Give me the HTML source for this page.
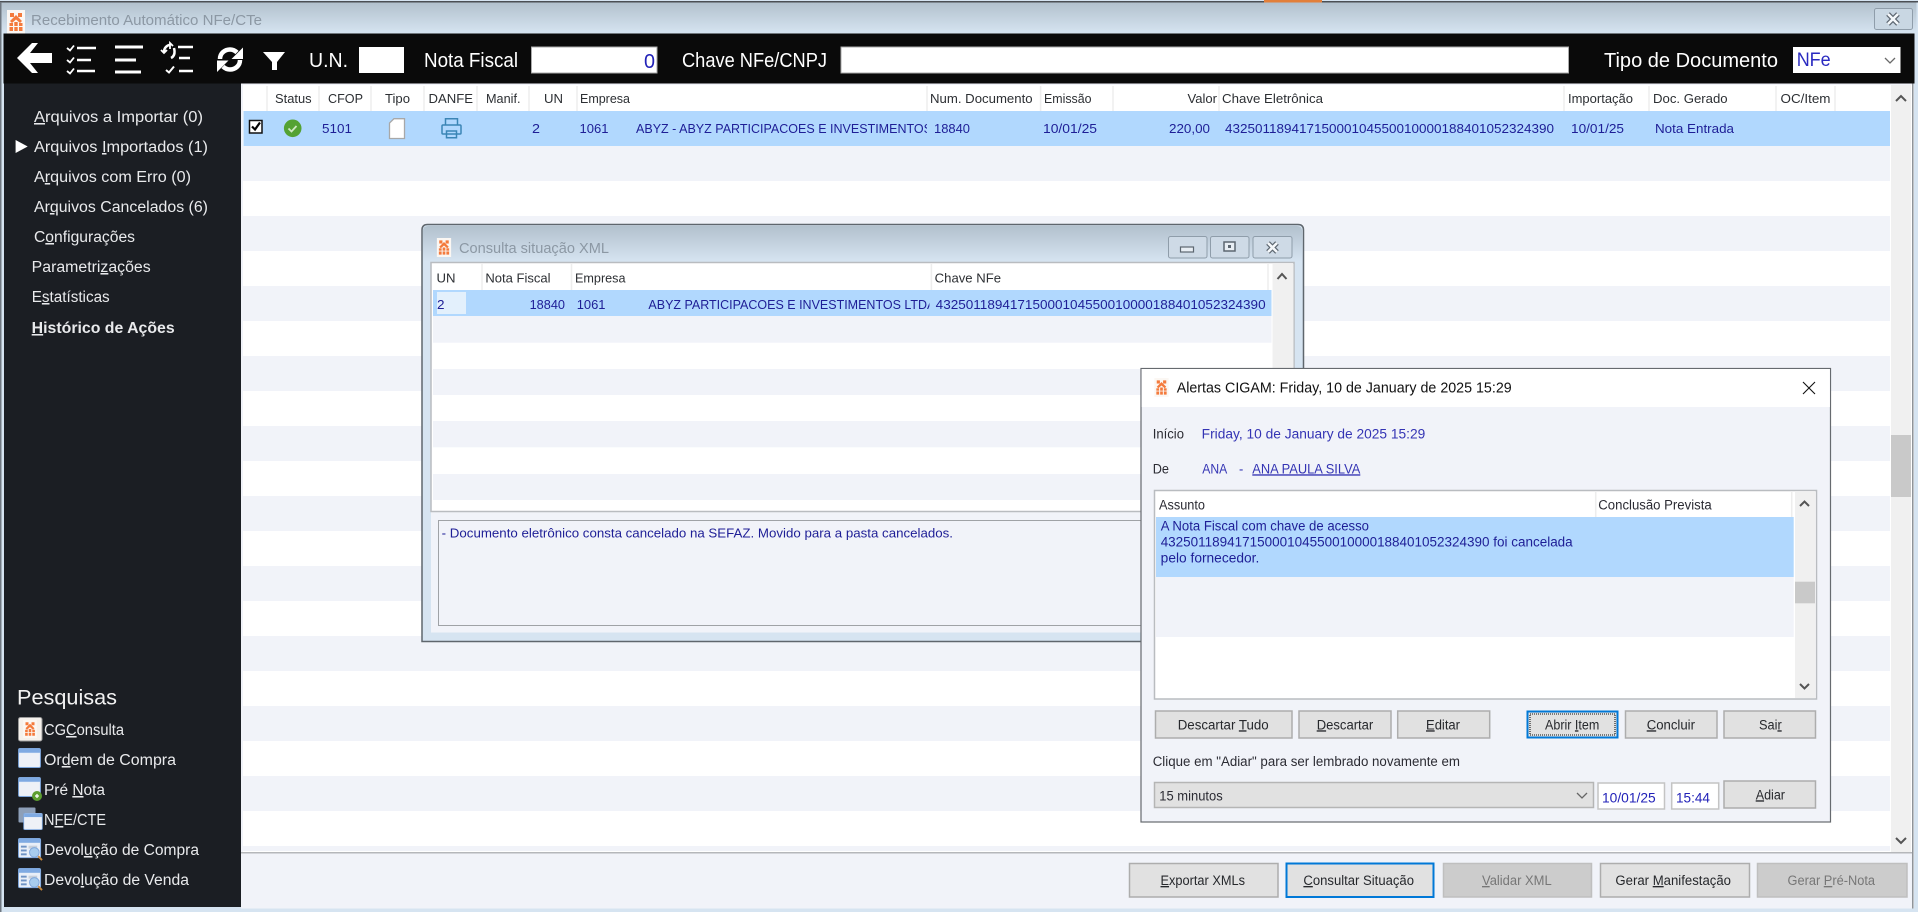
<!DOCTYPE html>
<html lang="pt-BR">
<head>
<meta charset="utf-8">
<title>Recebimento Automático NFe/CTe</title>
<style>
html,body{margin:0;padding:0;background:#f1f3f9;width:1918px;height:912px;overflow:hidden}
svg{display:block}
text{font-family:"Liberation Sans",sans-serif;font-size:13px;white-space:pre}
.h{fill:#2c2f33}
.r{fill:#1e1e96}
.s{fill:#e9eaec;font-size:15.5px}
.t{fill:#fff;font-size:20px}
.a{fill:#3434b4;font-size:13.5px}
.k{fill:#2b2b33;font-size:13.5px}
.b{fill:#26282c;font-size:13.5px}
.d{fill:#777;font-size:13.5px}
u,.u{text-decoration:underline}
</style>
</head>
<body>
<svg xmlns="http://www.w3.org/2000/svg" width="1918" height="912" viewBox="0 0 1918 912">
<defs>
<linearGradient id="tg" x1="0" y1="0" x2="0" y2="1"><stop offset="0" stop-color="#b2c1cd"/><stop offset="1" stop-color="#d6e4f1"/></linearGradient>
<symbol id="logo" viewBox="0 0 18 24">
<rect x="0" y="0" width="18" height="24" fill="#fbf7f3"/>
<g fill="#f47a3c"><rect x="3" y="3" width="4" height="4"/><rect x="11" y="3" width="4" height="4"/><path d="M9 5l6 6-2 2-4-3.500-4 3.500-2-2z"/><rect x="2.500" y="13" width="3.500" height="3"/><rect x="12" y="13" width="3.500" height="3"/><rect x="7.300" y="12" width="3.400" height="4"/><rect x="2.500" y="17" width="3.500" height="4"/><rect x="7.300" y="17" width="3.400" height="4"/><rect x="12" y="17" width="3.500" height="4"/></g>
</symbol>
<symbol id="win" viewBox="0 0 24 21">
<rect x=".5" y=".5" width="23" height="20" rx="1.500" fill="#e9eff8" stroke="#7da6dc"/>
<rect x="1" y="1" width="22" height="4" fill="#7faae2"/>
<rect x="2" y="6" width="20" height="13" fill="#eef1f7"/>
</symbol>
<symbol id="dev" viewBox="0 0 26 25">
<rect x=".5" y=".5" width="23" height="20" rx="1.500" fill="#e9eff8" stroke="#7da6dc"/>
<rect x="1" y="1" width="22" height="4" fill="#7faae2"/>
<rect x="3" y="8" width="6" height="2" fill="#6f93c4"/><rect x="3" y="12" width="6" height="2" fill="#6f93c4"/><rect x="3" y="16" width="6" height="2" fill="#6f93c4"/>
<rect x="11" y="8" width="9" height="3" fill="#c7cfda"/>
<circle cx="17" cy="15" r="5" fill="#a8cdee" stroke="#7da6dc"/>
<path d="M21 19l4 4" stroke="#c98a3c" stroke-width="2"/>
</symbol>
</defs>

<!-- frame -->
<rect width="1918" height="912" fill="#d6e4f1"/>
<rect x="0" y="1" width="1918" height="1.500" fill="#4b4f54"/>
<rect x="1264" y="0" width="58" height="2.500" fill="#e27f3a"/>
<rect x="0" y="2" width="1.500" height="910" fill="#6f7780"/>
<rect x="1.500" y="2.500" width="1915" height="31" fill="url(#tg)"/>
<use href="#logo" x="7" y="10" width="18" height="24"/>
<text x="31" y="25" fill="#8c98a4" font-size="14.500" textLength="231" lengthAdjust="spacingAndGlyphs" style="font-size:14.500px">Recebimento Automático NFe/CTe</text>
<rect x="1874.500" y="8.500" width="38" height="21" rx="2" fill="#c9d7e3" stroke="#8f9daa"/>
<path d="M1888 14l10 10M1898 14l-10 10" stroke="#5c6670" stroke-width="5"/>
<path d="M1888 14l10 10M1898 14l-10 10" stroke="#f4f7fa" stroke-width="2.600"/>

<!-- toolbar -->
<rect x="3.500" y="33.500" width="1911" height="50" fill="#0a0a0a"/>
<path d="M17 58L32 43H38L30 53H52V63H30L38 73H32Z" fill="#fff"/>
<g fill="none" stroke="#fff" stroke-width="2.500">
<path d="M77 48H96M77 60H91M77 71H95"/>
<path d="M67 48l3 2.500 4-5M67 60l3 2.500 4-5M67 71l3 2.500 4-5" stroke-width="1.800"/>
</g>
<path d="M115 47H143M115 60H136M115 72H141" stroke="#fff" stroke-width="3" fill="none"/>
<g fill="none" stroke="#fff" stroke-width="2.500">
<path d="M178 47H193M179 58H190M179 71H193"/>
<path d="M164 52c0-4 3-7 6-7M174 48c1 4 1 8-3 10"/>
<path d="M166 70l3 2.500 5-6" stroke-width="2"/>
<path d="M161 50l3 3 3-3M173 46l-3-3v6" stroke-width="1.800"/>
</g>
<g fill="none" stroke="#fff" stroke-width="4.500">
<path d="M220 59c0-6 5-9.500 10-9.500 3 0 5 1 7 3"/>
<path d="M240 60c0 6-5 9.500-10 9.500-3 0-5-1-7-3"/>
</g>
<path d="M243 47.500v11.500h-11.500zM217 72V60.500h11.500z" fill="#fff"/>
<path d="M263 52H285L277 62V70H272V62Z" fill="#fff"/>
<text class="t" x="309" y="67" textLength="39" lengthAdjust="spacingAndGlyphs">U.N.</text>
<rect x="359" y="47" width="45" height="26" fill="#fff"/>
<text class="t" x="424" y="67" textLength="94" lengthAdjust="spacingAndGlyphs">Nota Fiscal</text>
<rect x="531.500" y="47" width="125.500" height="26" fill="#fff" stroke="#aaa" stroke-width="1"/>
<text x="644" y="68" fill="#2222b8" style="font-size:20px" textLength="11" lengthAdjust="spacingAndGlyphs">0</text>
<text class="t" x="682" y="67" textLength="145" lengthAdjust="spacingAndGlyphs">Chave NFe/CNPJ</text>
<rect x="841" y="47" width="727.500" height="26" fill="#fff" stroke="#aaa" stroke-width="1"/>
<text class="t" x="1604" y="67" textLength="174" lengthAdjust="spacingAndGlyphs">Tipo de Documento</text>
<rect x="1793" y="47" width="107.500" height="26" fill="#fff"/>
<text x="1796.700" y="66" fill="#2a2ac0" style="font-size:19px" textLength="34" lengthAdjust="spacingAndGlyphs">NFe</text>
<path d="M1885 58l5 5 5-5" fill="none" stroke="#6a6a6a" stroke-width="1.300"/>

<!-- sidebar -->
<rect x="4" y="83.500" width="237" height="823.500" fill="#1b1e23"/>
<text class="s" x="34" y="122" textLength="169" lengthAdjust="spacingAndGlyphs"><tspan class="u">A</tspan>rquivos a Importar (0)</text>
<path d="M15.600 140L27.700 146.500 15.600 153Z" fill="#fff"/>
<text class="s" x="34" y="152" textLength="174" lengthAdjust="spacingAndGlyphs">Arquivos <tspan class="u">I</tspan>mportados (1)</text>
<text class="s" x="34" y="182" textLength="157" lengthAdjust="spacingAndGlyphs">A<tspan class="u">r</tspan>quivos com Erro (0)</text>
<text class="s" x="34" y="212" textLength="174" lengthAdjust="spacingAndGlyphs">Ar<tspan class="u">q</tspan>uivos Cancelados (6)</text>
<text class="s" x="34" y="242" textLength="101" lengthAdjust="spacingAndGlyphs">C<tspan class="u">o</tspan>nfigurações</text>
<text class="s" x="31.700" y="272" textLength="119" lengthAdjust="spacingAndGlyphs">Parametri<tspan class="u">z</tspan>ações</text>
<text class="s" x="31.700" y="302" textLength="78" lengthAdjust="spacingAndGlyphs">E<tspan class="u">s</tspan>tatísticas</text>
<text class="s" x="31.700" y="333" textLength="143" lengthAdjust="spacingAndGlyphs" font-weight="bold" fill="#fff"><tspan class="u">H</tspan>istórico de Ações</text>

<text x="17" y="704.500" fill="#f2f2f2" style="font-size:21px" textLength="100" lengthAdjust="spacingAndGlyphs">Pesquisas</text>
<rect x="18.500" y="717.500" width="23.500" height="23.500" rx="2" fill="#f5f1ec" stroke="#9a9a9a"/>
<use href="#logo" x="23" y="720" width="14" height="18"/>
<text class="s" x="44" y="735" textLength="80" lengthAdjust="spacingAndGlyphs">CG<tspan class="u">C</tspan>onsulta</text>
<use href="#win" x="18" y="748" width="23" height="20"/>
<text class="s" x="44" y="765" textLength="132" lengthAdjust="spacingAndGlyphs">Or<tspan class="u">d</tspan>em de Compra</text>
<use href="#win" x="18" y="777" width="23" height="20"/>
<circle cx="37" cy="796" r="5" fill="#5d9e30"/><path d="M35 796h4M37 794v4" stroke="#fff" stroke-width="1.300"/>
<text class="s" x="44" y="795" textLength="61" lengthAdjust="spacingAndGlyphs">Pré <tspan class="u">N</tspan>ota</text>
<rect x="18.500" y="807.500" width="17" height="15" rx="1" fill="#8d9fb8"/>
<use href="#win" x="23" y="813" width="20" height="17"/>
<text class="s" x="44" y="825" textLength="62" lengthAdjust="spacingAndGlyphs">N<tspan class="u">F</tspan>E/CTE</text>
<use href="#dev" x="18" y="838" width="25" height="24"/>
<text class="s" x="44" y="855" textLength="155" lengthAdjust="spacingAndGlyphs">Devol<tspan class="u">u</tspan>ção de Compra</text>
<use href="#dev" x="18" y="868" width="25" height="24"/>
<text class="s" x="44" y="885" textLength="145" lengthAdjust="spacingAndGlyphs">Devo<tspan class="u">l</tspan>ução de Venda</text>

<!-- main panel -->
<rect x="241" y="83.500" width="1673" height="825" fill="#f1f3f9"/>
<rect x="243" y="85" width="1669" height="767" fill="#fff"/>
<g fill="#f1f3f9">
<rect x="243" y="146" width="1647" height="35"/><rect x="243" y="216" width="1647" height="35"/><rect x="243" y="286" width="1647" height="35"/><rect x="243" y="356" width="1647" height="35"/><rect x="243" y="426" width="1647" height="35"/><rect x="243" y="496" width="1647" height="35"/><rect x="243" y="566" width="1647" height="35"/><rect x="243" y="636" width="1647" height="35"/><rect x="243" y="706" width="1647" height="35"/><rect x="243" y="776" width="1647" height="35"/><rect x="243" y="846" width="1647" height="5"/>
</g>
<rect x="243.500" y="111" width="1646.500" height="35" fill="#b1d8fe"/>
<rect x="1891" y="85" width="20" height="767" fill="#f0f0f0"/>
<rect x="1891" y="435" width="20" height="62" fill="#c9c9c9"/>
<path d="M1896 101l5-5 5 5M1896 838l5 5 5-5" fill="none" stroke="#555" stroke-width="2"/>
<rect x="241" y="852" width="1672" height="1.500" fill="#b5b7ba"/>
<rect x="1912" y="83.500" width="1.500" height="825" fill="#8f9499"/>
<g stroke="#ededed" stroke-width="1.500">
<path d="M267 86V111M319 86V111M371 86V111M424 86V111M477 86V111M529 86V111M577 86V111M927 86V111M1040.600 86V111M1113 86V111M1219 86V111M1564 86V111M1649 86V111M1776 86V111M1835 86V111"/>
</g>
<text class="h" x="275" y="103" textLength="36.600" lengthAdjust="spacingAndGlyphs">Status</text>
<text class="h" x="328" y="103" textLength="35" lengthAdjust="spacingAndGlyphs">CFOP</text>
<text class="h" x="385" y="103" textLength="25" lengthAdjust="spacingAndGlyphs">Tipo</text>
<text class="h" x="428.500" y="103" textLength="44.500" lengthAdjust="spacingAndGlyphs">DANFE</text>
<text class="h" x="486" y="103" textLength="34.500" lengthAdjust="spacingAndGlyphs">Manif.</text>
<text class="h" x="544" y="103" textLength="19" lengthAdjust="spacingAndGlyphs">UN</text>
<text class="h" x="580" y="103" textLength="50" lengthAdjust="spacingAndGlyphs">Empresa</text>
<text class="h" x="930" y="103" textLength="102.600" lengthAdjust="spacingAndGlyphs">Num. Documento</text>
<text class="h" x="1044" y="103" textLength="47.500" lengthAdjust="spacingAndGlyphs">Emissão</text>
<text class="h" x="1187.500" y="103" textLength="29.500" lengthAdjust="spacingAndGlyphs">Valor</text>
<text class="h" x="1222" y="103" textLength="101" lengthAdjust="spacingAndGlyphs">Chave Eletrônica</text>
<text class="h" x="1568" y="103" textLength="65" lengthAdjust="spacingAndGlyphs">Importação</text>
<text class="h" x="1653" y="103" textLength="74.600" lengthAdjust="spacingAndGlyphs">Doc. Gerado</text>
<text class="h" x="1780.500" y="103" textLength="50" lengthAdjust="spacingAndGlyphs">OC/Item</text>

<rect x="249.500" y="120.500" width="12.500" height="12.500" fill="#fff" stroke="#111" stroke-width="1.500"/>
<path d="M252 126.500l3 3 5-7" fill="none" stroke="#000" stroke-width="2.200"/>
<circle cx="292.700" cy="128.300" r="8.800" fill="#54a233"/>
<path d="M288.500 128.500l3 3 5-5.500" fill="none" stroke="#cfe8c2" stroke-width="1.800"/>
<text class="r" x="322" y="133" textLength="30" lengthAdjust="spacingAndGlyphs">5101</text>
<path d="M394 118.700H404.500V138.500H389.500V123Z" fill="#fff" stroke="#a8a8a8" stroke-width="1.300"/>
<g fill="none" stroke="#3b85b5" stroke-width="1.500">
<path d="M445.500 125V118.800H457.500V125"/>
<rect x="442" y="125" width="19" height="9" rx="1"/>
<path d="M446.500 131H456.500V137.800H446.500Z"/>
</g>
<text class="r" x="532" y="133" textLength="8" lengthAdjust="spacingAndGlyphs">2</text>
<text class="r" x="579.500" y="133" textLength="29" lengthAdjust="spacingAndGlyphs">1061</text>
<svg x="636" y="118" width="291" height="22"><text class="r" x="0" y="15" textLength="296" lengthAdjust="spacingAndGlyphs">ABYZ - ABYZ PARTICIPACOES E INVESTIMENTOS</text></svg>
<text class="r" x="934" y="133" textLength="36" lengthAdjust="spacingAndGlyphs">18840</text>
<text class="r" x="1043" y="133" textLength="54" lengthAdjust="spacingAndGlyphs">10/01/25</text>
<text class="r" x="1169" y="133" textLength="41" lengthAdjust="spacingAndGlyphs">220,00</text>
<text class="r" x="1225" y="133" textLength="329" lengthAdjust="spacingAndGlyphs">43250118941715000104550010000188401052324390</text>
<text class="r" x="1571" y="133" textLength="53" lengthAdjust="spacingAndGlyphs">10/01/25</text>
<text class="r" x="1655" y="133" textLength="79" lengthAdjust="spacingAndGlyphs">Nota Entrada</text>

<!-- bottom buttons -->
<g stroke-width="1.500">
<rect x="1129.500" y="863.500" width="148.500" height="33.500" fill="#e1e1e1" stroke="#adadad"/>
<rect x="1286.500" y="863.500" width="147" height="33.500" fill="#e1e1e1" stroke="#0078d7" stroke-width="2"/>
<rect x="1443.500" y="863.500" width="148" height="33.500" fill="#cccccc" stroke="#bfbfbf"/>
<rect x="1600.500" y="863.500" width="149" height="33.500" fill="#e1e1e1" stroke="#adadad"/>
<rect x="1757.500" y="863.500" width="149.500" height="33.500" fill="#cccccc" stroke="#bfbfbf"/>
</g>
<text class="b" x="1160.500" y="885" textLength="84.500" lengthAdjust="spacingAndGlyphs"><tspan class="u">E</tspan>xportar XMLs</text>
<text class="b" x="1303.400" y="885" textLength="110.600" lengthAdjust="spacingAndGlyphs"><tspan class="u">C</tspan>onsultar Situação</text>
<text class="d" x="1482" y="885" textLength="69.700" lengthAdjust="spacingAndGlyphs"><tspan class="u">V</tspan>alidar XML</text>
<text class="b" x="1615.400" y="885" textLength="115.600" lengthAdjust="spacingAndGlyphs">Gerar <tspan class="u">M</tspan>anifestação</text>
<text class="d" x="1787.500" y="885" textLength="87.500" lengthAdjust="spacingAndGlyphs">Gerar <tspan class="u">P</tspan>ré-Nota</text>

<!-- Consulta window -->
<path d="M422 641.500V230q0-5.500 5.500-5.500H1298q5.500 0 5.500 5.500V641.500Z" fill="#d6e4f1" stroke="#5f666d" stroke-width="1.500"/>
<path d="M423 262V231q0-5 5-5H1297q5 0 5 5V262Z" fill="url(#tg)"/>
<use href="#logo" x="435" y="238" width="18" height="19"/>
<text x="459" y="253" fill="#8c98a4" style="font-size:14.500px" textLength="150" lengthAdjust="spacingAndGlyphs">Consulta situação XML</text>
<g fill="#cedae6" stroke="#8f9daa">
<rect x="1168.500" y="236.500" width="38.500" height="21.500" rx="2"/>
<rect x="1210.500" y="236.500" width="38.500" height="21.500" rx="2"/>
<rect x="1253" y="236.500" width="39" height="21.500" rx="2"/>
</g>
<rect x="1180.500" y="247" width="13" height="5" fill="#e8eef4" stroke="#5c6670" stroke-width="1.200"/>
<rect x="1224" y="242" width="11" height="9" fill="#e8eef4" stroke="#5c6670" stroke-width="1.500"/>
<rect x="1228" y="245" width="3" height="3" fill="#5c6670"/>
<path d="M1268 243l9 9M1277 243l-9 9" stroke="#5c6670" stroke-width="5"/>
<path d="M1268 243l9 9M1277 243l-9 9" stroke="#f4f7fa" stroke-width="2.600"/>
<rect x="431" y="262.500" width="863" height="370" fill="#f1f3f9"/>
<rect x="431" y="262.500" width="863" height="249" fill="#fff" stroke="#b9bcc0" stroke-width="1.500"/>
<rect x="1272.500" y="264" width="21" height="247" fill="#f0f0f0"/>
<path d="M1277.500 279l4.500-5 4.500 5" fill="none" stroke="#555" stroke-width="2"/>
<g fill="#f1f3f9">
<rect x="433" y="316" width="838.500" height="26.700"/><rect x="433" y="369" width="838.500" height="26"/><rect x="433" y="421" width="838.500" height="26.300"/><rect x="433" y="474" width="838.500" height="26"/>
</g>
<rect x="433" y="290" width="838.500" height="26" fill="#b1d8fe"/>
<rect x="437" y="292" width="29" height="22" fill="#e3f0fc"/>
<path d="M482 264V290M571.500 264V290M931.400 264V290M1268 264V290" stroke="#ededed" stroke-width="1.500"/>
<text class="h" x="436.500" y="282.700" textLength="19" lengthAdjust="spacingAndGlyphs">UN</text>
<text class="h" x="485.400" y="282.700" textLength="65.200" lengthAdjust="spacingAndGlyphs">Nota Fiscal</text>
<text class="h" x="575" y="282.700" textLength="50.500" lengthAdjust="spacingAndGlyphs">Empresa</text>
<text class="h" x="934.700" y="282.700" textLength="66.300" lengthAdjust="spacingAndGlyphs">Chave NFe</text>
<text class="r" x="437" y="309" textLength="7.500" lengthAdjust="spacingAndGlyphs">2</text>
<text class="r" x="529.600" y="309" textLength="35.400" lengthAdjust="spacingAndGlyphs">18840</text>
<text class="r" x="576.700" y="309" textLength="28.800" lengthAdjust="spacingAndGlyphs">1061</text>
<svg x="648.400" y="294" width="281" height="20"><text class="r" x="0" y="15" textLength="287" lengthAdjust="spacingAndGlyphs">ABYZ PARTICIPACOES E INVESTIMENTOS LTDA</text></svg>
<text class="r" x="935.700" y="309" textLength="329.900" lengthAdjust="spacingAndGlyphs">43250118941715000104550010000188401052324390</text>
<rect x="438.500" y="520.500" width="850" height="105" fill="#f1f3f9" stroke="#9fa2a6"/>
<text class="r" x="441.700" y="537.700" textLength="511.300" lengthAdjust="spacingAndGlyphs">- Documento eletrônico consta cancelado na SEFAZ. Movido para a pasta cancelados.</text>

<!-- Alertas window -->
<rect x="1141" y="368.500" width="689.500" height="453.500" fill="#f1f3f9" stroke="#666a6f" stroke-width="1.200"/>
<rect x="1141.600" y="369" width="688.300" height="38" fill="#fff"/>
<use href="#logo" x="1153" y="378" width="17" height="19"/>
<text x="1176.700" y="392.500" fill="#111" style="font-size:15px" textLength="335" lengthAdjust="spacingAndGlyphs">Alertas CIGAM: Friday, 10 de January de 2025 15:29</text>
<path d="M1803 382L1815 394M1815 382L1803 394" stroke="#111" stroke-width="1.100"/>
<text class="k" x="1152.700" y="438.300" textLength="31.300" lengthAdjust="spacingAndGlyphs">Início</text>
<text class="a" x="1201.700" y="438.300" textLength="223.600" lengthAdjust="spacingAndGlyphs">Friday, 10 de January de 2025 15:29</text>
<text class="k" x="1152.700" y="473.300" textLength="16.300" lengthAdjust="spacingAndGlyphs">De</text>
<text class="a" x="1202.300" y="473.300" textLength="25" lengthAdjust="spacingAndGlyphs">ANA</text>
<text class="a" x="1239" y="473.300" textLength="4.300" lengthAdjust="spacingAndGlyphs">-</text>
<text class="a u" x="1252.300" y="473.300" textLength="108" lengthAdjust="spacingAndGlyphs">ANA PAULA SILVA</text>
<rect x="1154.500" y="490.500" width="662" height="208.500" fill="#fff" stroke="#b9bcc0" stroke-width="1.500"/>
<rect x="1156" y="577" width="637.700" height="60" fill="#f1f3f9"/>
<rect x="1156" y="517" width="637.700" height="60" fill="#b1d8fe"/>
<rect x="1795" y="492" width="20" height="206" fill="#f0f0f0"/>
<rect x="1795" y="581.700" width="20" height="21.600" fill="#c9c9c9"/>
<path d="M1800 506l4.500-4.500 4.500 4.500M1800 684l4.500 4.500 4.500-4.500" fill="none" stroke="#555" stroke-width="2"/>
<path d="M1595.700 492V517M1791.700 492V517" stroke="#ededed" stroke-width="1.500"/>
<text class="k" x="1159" y="509.300" textLength="46" lengthAdjust="spacingAndGlyphs">Assunto</text>
<text class="k" x="1598.300" y="509.300" textLength="113.400" lengthAdjust="spacingAndGlyphs">Conclusão Prevista</text>
<text class="a" x="1160.700" y="530.700" textLength="208.300" lengthAdjust="spacingAndGlyphs" style="fill:#1e1e96">A Nota Fiscal com chave de acesso</text>
<text class="a" x="1160.700" y="546.700" textLength="412" lengthAdjust="spacingAndGlyphs" style="fill:#1e1e96">43250118941715000104550010000188401052324390 foi cancelada</text>
<text class="a" x="1160.700" y="562.700" textLength="98.600" lengthAdjust="spacingAndGlyphs" style="fill:#1e1e96">pelo fornecedor.</text>

<g fill="#e1e1e1" stroke="#adadad" stroke-width="1.500">
<rect x="1155.500" y="711" width="136.500" height="27"/>
<rect x="1299" y="711" width="92" height="27"/>
<rect x="1397.700" y="711" width="92" height="27"/>
<rect x="1625.500" y="711" width="91.500" height="27"/>
<rect x="1724" y="711" width="91.500" height="27"/>
<rect x="1724" y="781" width="91.500" height="27"/>
</g>
<rect x="1527.500" y="711.500" width="90" height="26" fill="#e1e1e1" stroke="#0078d7" stroke-width="2"/>
<rect x="1530" y="714" width="85" height="21" fill="none" stroke="#111" stroke-width="1.100" stroke-dasharray="1 1"/>
<text class="b" x="1177.700" y="729.300" textLength="91" lengthAdjust="spacingAndGlyphs">Descartar <tspan class="u">T</tspan>udo</text>
<text class="b" x="1316.700" y="729.300" textLength="56.600" lengthAdjust="spacingAndGlyphs"><tspan class="u">D</tspan>escartar</text>
<text class="b" x="1426" y="729.300" textLength="34" lengthAdjust="spacingAndGlyphs"><tspan class="u">E</tspan>ditar</text>
<text class="b" x="1545" y="729.300" textLength="54.300" lengthAdjust="spacingAndGlyphs">Abrir <tspan class="u">I</tspan>tem</text>
<text class="b" x="1646.700" y="729.300" textLength="48.300" lengthAdjust="spacingAndGlyphs"><tspan class="u">C</tspan>oncluir</text>
<text class="b" x="1759" y="729.300" textLength="22.700" lengthAdjust="spacingAndGlyphs">Sai<tspan class="u">r</tspan></text>
<text class="k" x="1152.700" y="766" textLength="307.300" lengthAdjust="spacingAndGlyphs">Clique em "Adiar" para ser lembrado novamente em</text>
<rect x="1154.500" y="782.500" width="439" height="25" fill="#e1e1e1" stroke="#b5b5b5" stroke-width="1.500"/>
<text class="k" x="1159.300" y="800.700" textLength="63.400" lengthAdjust="spacingAndGlyphs">15 minutos</text>
<path d="M1577 793l5 5 5-5" fill="none" stroke="#666" stroke-width="1.300"/>
<rect x="1598" y="783" width="66.500" height="26" fill="#fff" stroke="#c4c4c4" stroke-width="1.500"/>
<text class="a" x="1602" y="802.300" textLength="53.700" lengthAdjust="spacingAndGlyphs" style="fill:#2222b8">10/01/25</text>
<rect x="1671.700" y="783" width="47" height="26" fill="#fff" stroke="#c4c4c4" stroke-width="1.500"/>
<text class="a" x="1676" y="802.300" textLength="34" lengthAdjust="spacingAndGlyphs" style="fill:#2222b8">15:44</text>
<text class="b" x="1755.700" y="799.300" textLength="29.300" lengthAdjust="spacingAndGlyphs"><tspan class="u">A</tspan>diar</text>
</svg>
</body>
</html>
